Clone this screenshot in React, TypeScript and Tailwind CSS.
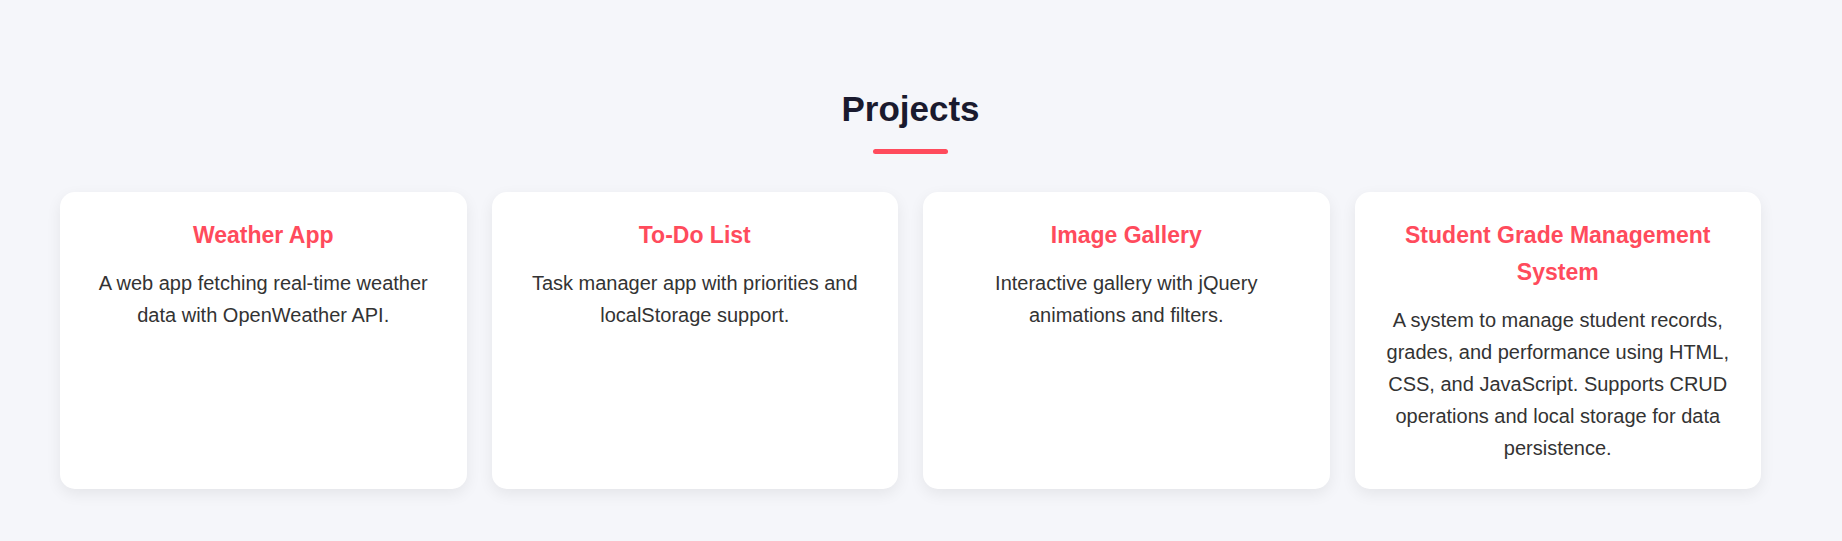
const projects = [
  {
    title: "Weather App",
    text: "A web app fetching real-time weather data with OpenWeather API.",
  },
  {
    title: "To-Do List",
    text: "Task manager app with priorities and localStorage support.",
  },
  {
    title: "Image Gallery",
    text: "Interactive gallery with jQuery animations and filters.",
  },
  {
    title: "Student Grade Management System",
    text: "A system to manage student records, grades, and performance using HTML, CSS, and JavaScript. Supports CRUD operations and local storage for data persistence.",
  },
];

export default function App() {
  return (
    <div className="min-h-screen bg-[#f5f6fa] font-['Liberation_Sans',Arial,sans-serif] leading-[1.6] text-[#333]">
      <section className="w-[1821px] px-[60px] pt-[81px] pb-[52px]">
        <h2 className="text-center text-[35px] font-bold leading-[1.6] text-[#1a1a2e]">Projects</h2>
        <div className="mx-auto mt-[12px] h-[5px] w-[75px] rounded-full bg-[#ff4b5c]" />

        <div className="mt-[38px] grid grid-cols-4 gap-[25px]">
          {projects.map((p) => (
            <div
              key={p.title}
              className="rounded-[15px] bg-white px-[25px] py-[25px] text-center shadow-[0_5px_15px_rgba(0,0,0,0.07)]"
            >
              <h3 className="mb-[13px] text-[23px] font-bold leading-[1.6] text-[#ff4b5c]">{p.title}</h3>
              <p className="text-[20px] leading-[1.6] text-[#333]">{p.text}</p>
            </div>
          ))}
        </div>
      </section>
    </div>
  );
}
